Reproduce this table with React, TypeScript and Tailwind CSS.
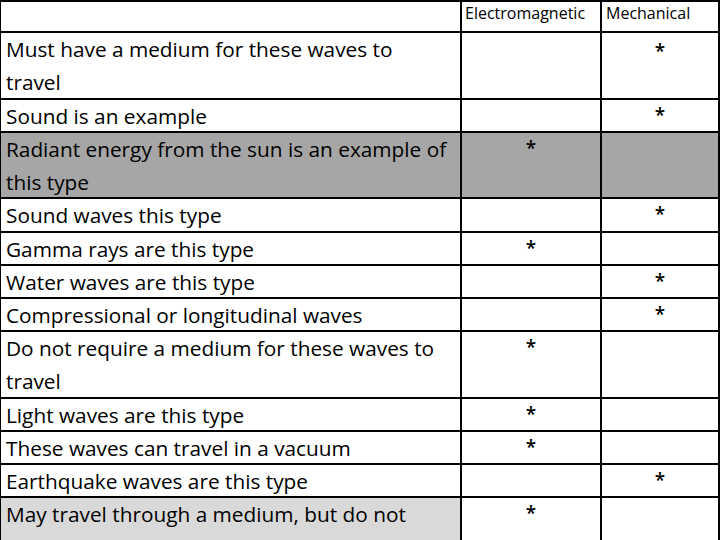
import React from "react";

type Row = { lines: string[]; em: boolean; mech: boolean; h: string; bg?: string; firstBg?: string; low?: boolean };

const rows: Row[] = [
  { lines: ["Must have a medium for these waves to", "travel"], em: false, mech: true, h: "h-[67px]", low: true },
  { lines: ["Sound is an example"], em: false, mech: true, h: "h-[33px]" },
  { lines: ["Radiant energy from the sun is an example of", "this type"], em: true, mech: false, h: "h-[66px]", bg: "bg-[#a6a6a6]" },
  { lines: ["Sound waves this type"], em: false, mech: true, h: "h-[34px]" },
  { lines: ["Gamma rays are this type"], em: true, mech: false, h: "h-[33px]" },
  { lines: ["Water waves are this type"], em: false, mech: true, h: "h-[33px]" },
  { lines: ["Compressional or longitudinal waves"], em: false, mech: true, h: "h-[33px]" },
  { lines: ["Do not require a medium for these waves to", "travel"], em: true, mech: false, h: "h-[67px]" },
  { lines: ["Light waves are this type"], em: true, mech: false, h: "h-[33px]" },
  { lines: ["These waves can travel in a vacuum"], em: true, mech: false, h: "h-[33px]" },
  { lines: ["Earthquake waves are this type"], em: false, mech: true, h: "h-[33px]" },
  { lines: ["May travel through a medium, but do not"], em: true, mech: false, h: "h-[60px]", firstBg: "bg-[#d9d9d9]" },
];

function Star({ low }: { low?: boolean }) {
  return (
    <div className={`text-center leading-[30px] text-[19px] font-semibold text-black ${low ? "pt-[3px]" : ""}`}>*</div>
  );
}

export default function App() {
  return (
    <div
      className="w-[720px] h-[540px] overflow-hidden bg-white text-black"
      style={{ fontFamily: "'Open Sans', sans-serif" }}
    >
      <div className="flex h-[33px] border-t-2 border-b-2 border-l border-black">
        <div className="w-[461px] border-r-2 border-black" />
        <div className="w-[140px] border-r-2 border-black pl-[3px] text-[16px] leading-[22px]">
          Electromagnetic
        </div>
        <div className="w-[118px] border-r-2 border-black pl-[4px] text-[16px] leading-[22px]">
          Mechanical
        </div>
      </div>
      {rows.map((r, i) => (
        <div key={i} className={`flex ${r.h} border-b-2 border-l border-black ${r.bg ?? ""}`}>
          <div
            className={`w-[461px] shrink-0 border-r-2 border-black pl-[5px] text-[20.8px] leading-[33px] ${r.firstBg ?? ""}`}
          >
            {r.lines.map((l, j) => (
              <div key={j} className="whitespace-nowrap">
                {l}
              </div>
            ))}
          </div>
          <div className="w-[140px] shrink-0 border-r-2 border-black">{r.em && <Star />}</div>
          <div className="w-[118px] shrink-0 border-r-2 border-black">{r.mech && <Star low={r.low} />}</div>
        </div>
      ))}
    </div>
  );
}
